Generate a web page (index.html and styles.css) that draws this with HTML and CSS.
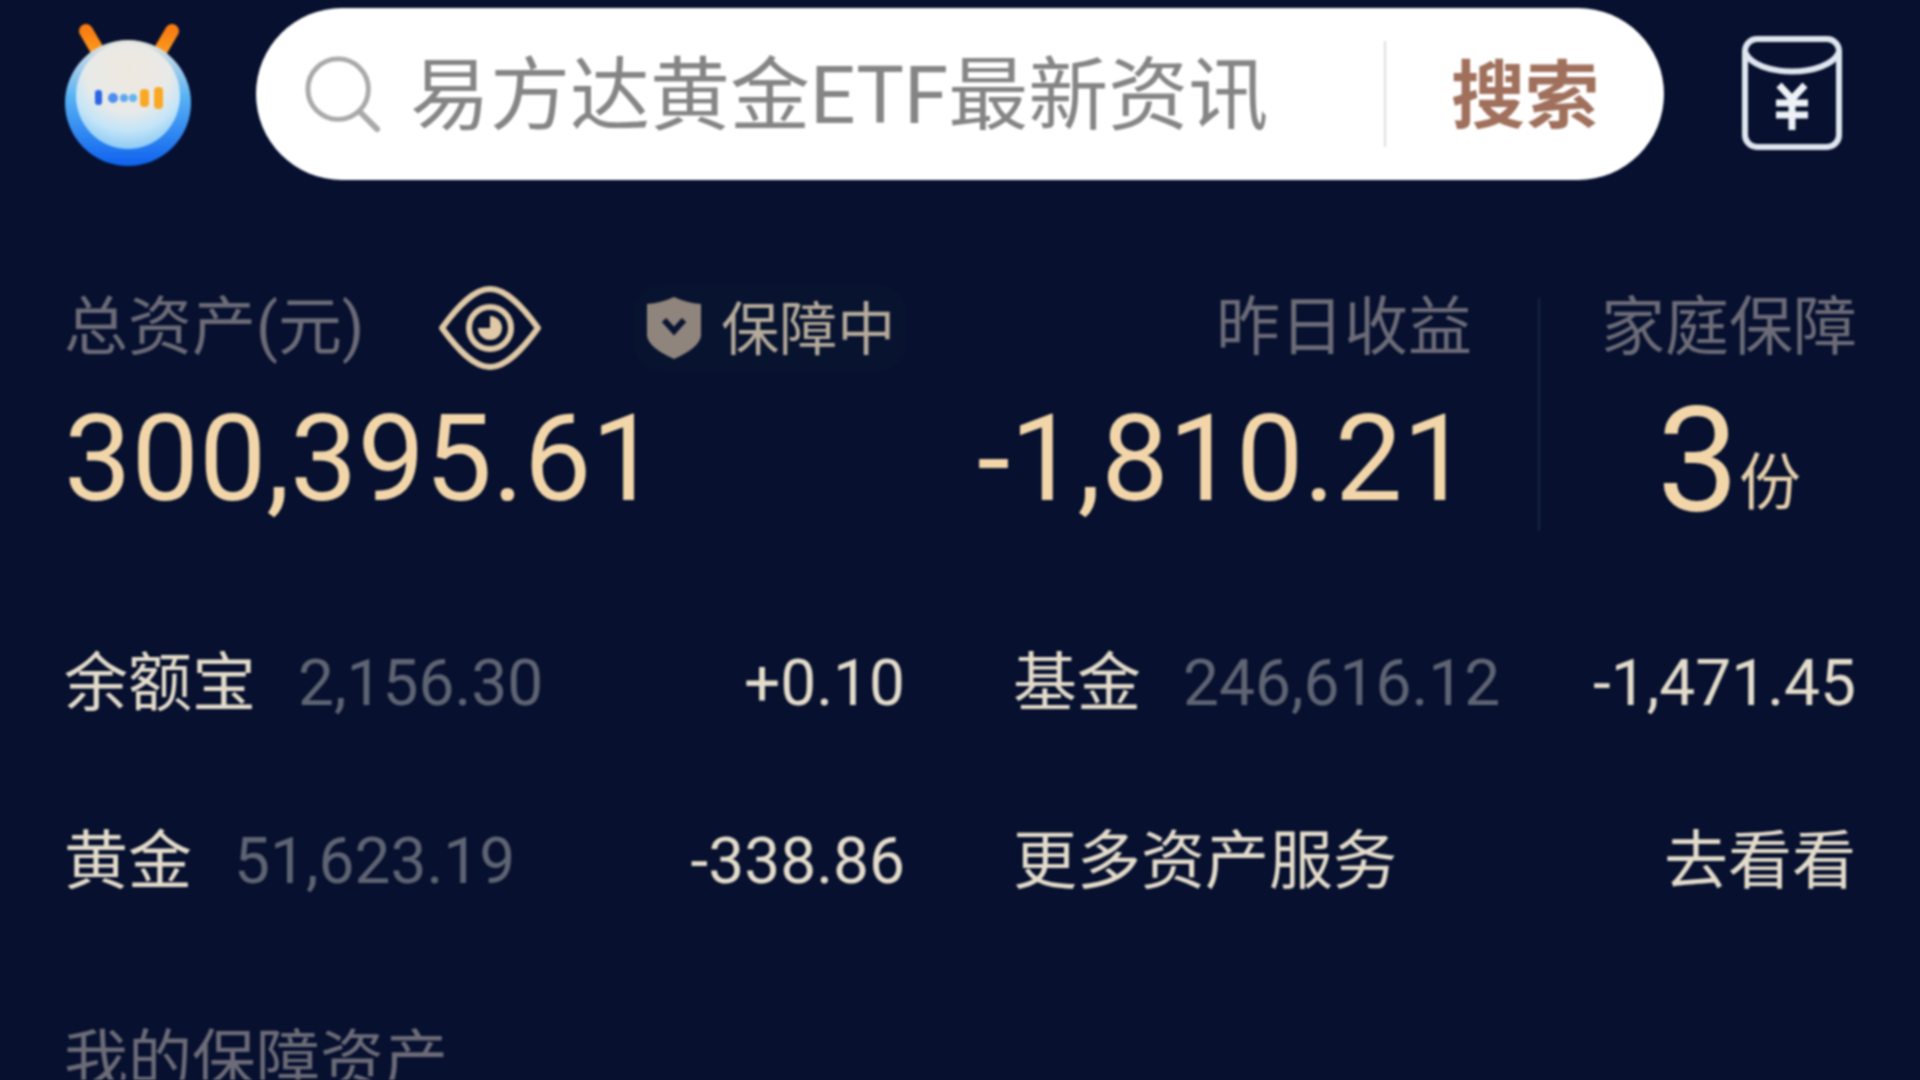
FILE: index.html
```html
<!DOCTYPE html>
<html lang="zh-CN">
<head>
<meta charset="utf-8">
<title>总资产</title>
<link rel="stylesheet" href="styles.css">
</head>
<body>
<main class="page">
  <header class="topbar">
    <svg class="logo" viewBox="0 0 134 146" aria-hidden="true">
      <defs>
        <radialGradient id="face" cx="50%" cy="25%" r="80%">
          <stop offset="0" stop-color="#efe9df"/>
          <stop offset=".5" stop-color="#e8eae8"/>
          <stop offset=".72" stop-color="#c4e5f8"/>
          <stop offset="1" stop-color="#7cc3f4"/>
        </radialGradient>
        <linearGradient id="rim" x1="0" y1="0" x2="0" y2="1">
          <stop offset="0" stop-color="#e9e6df"/>
          <stop offset=".45" stop-color="#58b2f5"/>
          <stop offset="1" stop-color="#0f62ee"/>
        </linearGradient>
        <linearGradient id="horn" x1="0" y1="0" x2="0" y2="1">
          <stop offset="0" stop-color="#f97d12"/>
          <stop offset=".7" stop-color="#fb9a1e"/>
          <stop offset="1" stop-color="#f0c68f"/>
        </linearGradient>
      </defs>
      <path d="M24 9 L41 38" stroke="url(#horn)" stroke-width="14" stroke-linecap="round" fill="none"/>
      <path d="M110 9 L93 38" stroke="url(#horn)" stroke-width="14" stroke-linecap="round" fill="none"/>
      <circle cx="66" cy="81" r="63" fill="url(#rim)"/>
      <ellipse cx="66" cy="74" rx="52" ry="53" fill="url(#face)"/>
      <rect x="33" y="68" width="7" height="15" rx="3" fill="#2a63e6"/>
      <circle cx="51" cy="76" r="5" fill="#4c8df0"/>
      <circle cx="62" cy="76" r="4" fill="#5ba8f0"/>
      <circle cx="71" cy="76" r="4" fill="#63b4f0"/>
      <rect x="78" y="67" width="9" height="18" rx="4" fill="#f9a825"/>
      <rect x="92" y="65" width="9" height="22" rx="4" fill="#f9a825"/>
    </svg>
    <div class="search">
      <svg class="search-icon" viewBox="0 0 80 80" aria-hidden="true">
        <circle cx="35" cy="35" r="31" fill="none" stroke="#a9a9a9" stroke-width="5"/>
        <path d="M57 58 L75 76" stroke="#a9a9a9" stroke-width="6" stroke-linecap="round"/>
      </svg>
      <span class="placeholder">易方达黄金ETF最新资讯</span>
      <span class="search-btn">搜索</span>
    </div>
    <svg class="packet" viewBox="0 0 100 114" aria-hidden="true">
      <rect x="3" y="3" width="94" height="108" rx="12" fill="none" stroke="#dfe6ef" stroke-width="6"/>
      <path d="M3 16 C14 42 86 42 97 16" fill="none" stroke="#dfe6ef" stroke-width="6"/>
      <path d="M37 49 L50 63 L63 49 M34 67 H66 M34 79 H66 M50 63 V94" fill="none" stroke="#eef2f7" stroke-width="7"/>
    </svg>
  </header>

  <section class="summary">
    <div class="col-total">
      <div class="label-row">
        <span class="label">总资产(元)</span>
        <svg class="eye" viewBox="0 0 104 84" aria-hidden="true">
          <path d="M4 42 C20 20 36 3 52 3 C68 3 84 20 100 42 C84 64 68 81 52 81 C36 81 20 64 4 42 Z" fill="none" stroke="#e0c9a6" stroke-width="6" stroke-linejoin="round"/>
          <circle cx="52" cy="42" r="21" fill="none" stroke="#e0c9a6" stroke-width="6"/>
          <path d="M52 30 A12 12 0 1 1 40 42 L52 42 Z" fill="#e0c9a6"/>
        </svg>
        <span class="badge">
          <svg class="shield" viewBox="0 0 58 64" aria-hidden="true">
            <path d="M2 8 Q16 7 29 1 Q42 7 56 8 V40 Q54 52 29 63 Q4 52 2 40 Z" fill="#8f857c"/>
            <path d="M19 24 L29 35 L39 24" fill="none" stroke="#0a1533" stroke-width="6"/>
          </svg>
          <span class="badge-text">保障中</span>
        </span>
      </div>
      <div class="amount">300,395.61</div>
    </div>
    <div class="col-yesterday">
      <div class="label">昨日收益</div>
      <div class="amount">-1,810.21</div>
    </div>
    <div class="divider"></div>
    <div class="col-family">
      <div class="label">家庭保障</div>
      <div class="share"><span class="share-num">3</span><span class="share-unit">份</span></div>
    </div>
  </section>

  <section class="assets">
    <div class="asset"><span class="asset-name">余额宝</span><span class="asset-value">2,156.30</span><span class="asset-change">+0.10</span></div>
    <div class="asset"><span class="asset-name">基金</span><span class="asset-value">246,616.12</span><span class="asset-change">-1,471.45</span></div>
    <div class="asset"><span class="asset-name">黄金</span><span class="asset-value">51,623.19</span><span class="asset-change">-338.86</span></div>
    <div class="asset"><span class="asset-name">更多资产服务</span><span class="asset-change asset-link">去看看</span></div>
  </section>

  <h2 class="section-title">我的保障资产</h2>
</main>
</body>
</html>
```
FILE: styles.css
```css
* { box-sizing: border-box; }
html, body { margin: 0; height: 100%; overflow: hidden; background: #07112f; }
body { font-family: Roboto, "Noto Sans CJK SC", sans-serif; }
.page { width: 1920px; height: 1080px; overflow: hidden; padding: 8px 64px 0 64px; filter: blur(1px); }

.topbar { display: flex; align-items: center; height: 172px; }
.logo { width: 134px; height: 146px; flex: none; margin: 2px 60px 0 -2px; }
.search { display: flex; align-items: center; width: 1408px; height: 172px; padding: 0 65px 0 48px; flex: none; background: #fff; border-radius: 86px; }
.search-icon { width: 78px; height: 78px; flex: none; margin-right: 28px; }
.placeholder { flex: 1; padding-top: 4px; font-size: 80px; line-height: 1; color: #858585; white-space: nowrap; }
.search-btn { height: 106px; padding-left: 65px; border-left: 2px solid #e0dfdd; font-size: 74px; line-height: 112px; font-weight: 700; color: #a0705c; }
.packet { width: 100px; height: 114px; flex: none; margin: -2px 0 0 78px; }

.summary { display: flex; margin-top: 110px; }
.label { font-size: 64px; line-height: 76px; color: #6c6b77; white-space: nowrap; }
.label-row { display: flex; align-items: center; height: 76px; }
.eye { width: 104px; height: 84px; flex: none; margin-left: 74px; }
.badge { display: flex; align-items: center; margin-left: 103px; border-radius: 16px; background: #08132f; box-shadow: 0 0 0 12px #08132f; }
.shield { width: 58px; height: 64px; flex: none; }
.badge-text { margin-left: 18px; padding-top: 4px; font-size: 58px; line-height: 1; color: #b5aa9a; }
.amount { margin-top: 35px; font-size: 120px; line-height: 116px; color: #f2d6aa; white-space: nowrap; }
.col-total { width: 1002px; flex: none; }
.col-yesterday { display: flex; flex-direction: column; align-items: flex-end; width: 406px; flex: none; }
.col-yesterday .amount { margin-right: 2px; }
.divider { flex: none; width: 2px; height: 233px; margin: 8px 0 0 66px; background: #172444; }
.col-family { flex: 1; padding-left: 61px; text-align: center; }
.share { display: flex; justify-content: center; align-items: flex-end; margin-top: 23px; color: #f2d6aa; }
.share-num { font-size: 146px; line-height: 146px; }
.share-unit { margin: 0 0 20px 0; font-size: 62px; line-height: 1; color: #e6cfab; }

.assets { display: grid; grid-template-columns: 841px 843px; column-gap: 108px; row-gap: 100px; margin-top: 110px; }
.asset { display: flex; align-items: center; height: 78px; }
.asset-name { font-size: 64px; line-height: 1; color: #e4dccb; white-space: nowrap; }
.asset-value { margin-left: 42px; font-size: 64px; line-height: 1; color: #5f6473; }
.asset-change { margin-left: auto; font-size: 64px; line-height: 1; color: #e4dccb; }

.section-title { margin: 122px 0 0; font-size: 64px; line-height: 76px; font-weight: 400; color: #6c6b77; }
```
